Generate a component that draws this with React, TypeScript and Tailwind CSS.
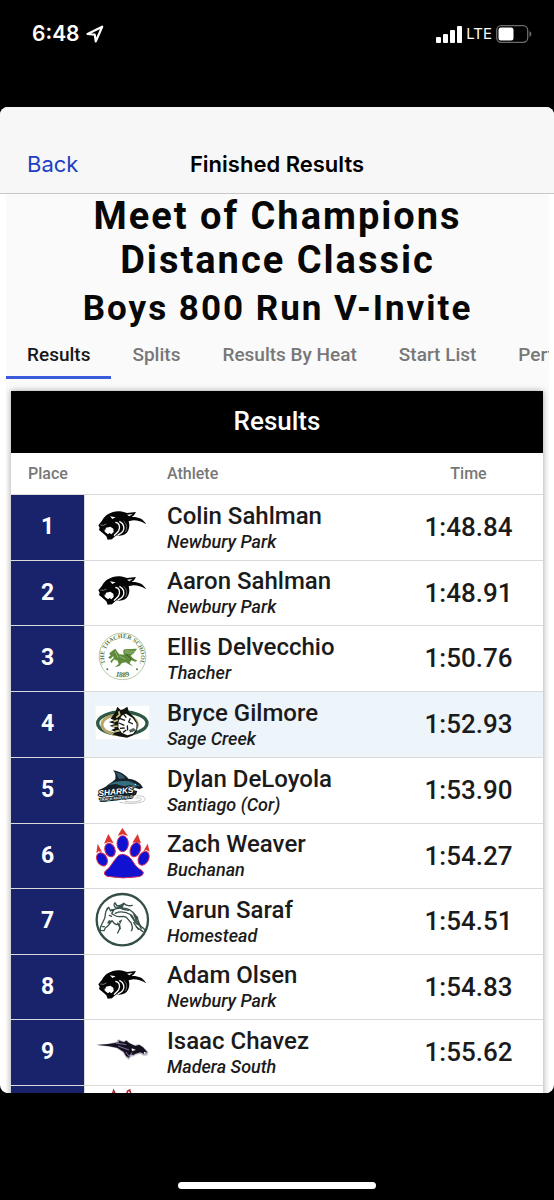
import React from "react";

const logoClass = "block h-16 w-[75px]";

const PantherLogo = () => (
  <svg viewBox="0 0 225 192" className={logoClass} aria-hidden="true">
    <path
      d="M40 88L51 74C59 58 77 47 100 46C111 45 119 49 126 51L153 48L147 58L140 63C158 62 174 67 184 85C171 77 158 73 145 73L131 76C136 91 131 108 120 115C113 119 103 120 95 118C89 122 85 126 81 130L68 131L64 121L53 111L42 102L44 95Z"
      fill="#050505"
    />
    <path d="M55 97L60 104L63 95L76 92L85 98L86 108L79 115L74 111L69 115L60 108Z" fill="white" />
    <path d="M75 61l17 3-10 5zM126 56l17-2-10 7z" fill="white" />
    <path
      d="M91 79C104 80 106 94 101 104C97 111 91 113 87 119M103 76C117 82 120 97 113 107C109 113 103 115 98 117"
      fill="none"
      stroke="white"
      strokeWidth="4"
    />
    <path d="M116 76C127 84 127 99 121 108" fill="none" stroke="#9c9c9c" strokeWidth="2" />
    <path d="M46 87l10 1 8-4" fill="none" stroke="#b5b5b5" strokeWidth="2" />
  </svg>
);

const ThacherLogo = () => (
  <svg viewBox="0 0 225 192" className={logoClass} aria-hidden="true">
    <defs>
      <path id="seal-top" d="M68 121A55 55 0 1 1 157 121" />
      <path id="seal-bottom" d="M72 135A60 60 0 0 0 153 135" />
    </defs>
    <circle cx="112.5" cy="88" r="70" fill="white" stroke="#8fac76" strokeWidth="2" />
    <text fill="#55793c" fontSize="18" fontFamily="Liberation Serif" fontWeight="700">
      <textPath href="#seal-top" startOffset="50%" textAnchor="middle">
        THE THACHER SCHOOL
      </textPath>
    </text>
    <text fill="#55793c" fontSize="22" fontFamily="Liberation Serif" fontWeight="700">
      <textPath href="#seal-bottom" startOffset="50%" textAnchor="middle">
        1889
      </textPath>
    </text>
    <circle cx="67" cy="127" r="3" fill="#55793c" />
    <circle cx="156" cy="127" r="3" fill="#55793c" />
    <path
      d="M73 79L84 70L91 65L96 73L103 82L117 83C114 74 113 69 119 67L156 65L151 73L145 80L137 86L144 94L157 101L151 104L139 100L134 108L144 118L130 111L122 106L111 108L103 117L89 121L101 111L97 100L86 98L79 109L76 102L86 93L85 87L76 96L69 91L77 86Z"
      fill="#5f8a3a"
    />
    <path d="M119 72l31 1M120 77l24 2M91 72l8 20M104 88l17 8M87 97l9 4" stroke="#b4ca92" strokeWidth="2" />
    <path d="M123 83C133 88 137 94 139 99" fill="none" stroke="#365d25" strokeWidth="3" />
  </svg>
);

const SageCreekLogo = () => (
  <svg viewBox="0 0 225 192" className={logoClass} aria-hidden="true">
    <rect x="32" y="39" width="161" height="100" fill="white" />
    <ellipse cx="112" cy="91" rx="74" ry="34" fill="none" stroke="#2d5843" strokeWidth="10" />
    <ellipse cx="104" cy="95" rx="53" ry="30" fill="none" stroke="#b5a66a" strokeWidth="9" />
    <path
      d="M77 77L91 57L97 41L107 51L115 49L127 41L132 57L147 72L158 92L156 112L145 127L126 134L101 130L82 124L94 117L78 112L91 105L74 98L90 93L71 87L89 82Z"
      fill="#11130f"
    />
    <path d="M110 68L123 62L143 75L155 92L154 109L144 122L127 127L110 119L100 104L101 84Z" fill="white" />
    <path
      d="M101 55l3 10-10 9M86 86l13-5M83 101l15-2M91 115l13-2"
      stroke="#d5c67f"
      strokeWidth="5"
      fill="none"
    />
    <path
      d="M104 76l16 6M102 90l16 7M105 106l14-1M114 118l10-7M136 76l-5 11 13 6M151 110l-17 7M127 97l1 15M117 65l7 9"
      fill="none"
      stroke="#141813"
      strokeWidth="4"
    />
    <path d="M131 112l14-7 6 4-9 9z" fill="#56685d" />
  </svg>
);

const SharksLogo = () => (
  <svg viewBox="0 0 225 192" className={logoClass} aria-hidden="true">
    <path
      d="M62 83C74 73 87 66 91 60C93 49 90 39 84 34C105 37 121 47 130 59C151 61 167 71 174 86L163 91L150 86L138 92L157 96L153 107L139 114L126 108L50 112L44 92Z"
      fill="#17212a"
    />
    <path d="M67 79C85 67 105 64 133 67L166 81L150 82L133 78L119 82L91 75Z" fill="#356f80" />
    <path d="M92 40C106 43 116 50 121 58L102 60Z" fill="#35586b" />
    <path d="M128 81l25 2-19 6z" fill="#d6e0e3" />
    <circle cx="151" cy="76" r="2" fill="white" />
    <path
      d="M154 111C170 108 184 115 179 124C172 133 137 136 104 130M151 118C164 114 174 119 167 124C154 130 134 130 120 127"
      fill="none"
      stroke="#c5c5c5"
      strokeWidth="3"
    />
    <g transform="translate(41 112) rotate(-6)">
      <text
        fontFamily="Liberation Sans"
        fontSize="25"
        fontStyle="italic"
        fontWeight="700"
        fill="white"
        stroke="#111d24"
        strokeWidth="6"
        strokeLinejoin="round"
        paintOrder="stroke"
      >
        SHARKS
      </text>
      <text
        x="2"
        y="15"
        fontFamily="Liberation Sans"
        fontSize="11"
        fontWeight="700"
        fill="white"
        stroke="#111d24"
        strokeWidth="5"
        paintOrder="stroke"
      >
        TRACK AND FIELD
      </text>
    </g>
  </svg>
);

const PawLogo = () => (
  <svg viewBox="0 0 225 192" className={logoClass} aria-hidden="true">
    <g fill="#df3530">
      <path d="M112 12L129 36L113 31L98 35Z" />
      <path d="M70 30L86 58L71 54L57 59Z" />
      <path d="M158 30L168 58L154 54L142 56Z" />
      <path d="M38 59L51 84L41 82L34 88Z" />
      <path d="M188 59L194 83L184 78L175 82Z" />
    </g>
    <g fill="#1111d2" stroke="#d42b56" strokeWidth="3">
      <ellipse cx="113" cy="59" rx="17" ry="24" />
      <ellipse cx="75" cy="78" rx="15" ry="21" transform="rotate(-20 75 78)" />
      <ellipse cx="151" cy="77" rx="15" ry="22" transform="rotate(20 151 77)" />
      <ellipse cx="51" cy="106" rx="15" ry="21" transform="rotate(-28 51 106)" />
      <ellipse cx="176" cy="103" rx="15" ry="22" transform="rotate(27 176 103)" />
      <path d="M101 94Q113 87 126 95C139 101 144 115 153 126Q159 133 171 140Q178 146 173 152Q169 156 161 158Q112 166 67 157Q53 151 61 141C76 132 84 111 101 94Z" />
    </g>
  </svg>
);

const HorseLogo = () => (
  <svg viewBox="0 0 225 192" className={logoClass} aria-hidden="true">
    <circle cx="112" cy="89" r="77" fill="white" stroke="#344f48" strokeWidth="7" />
    <g fill="none" stroke="#38504a" strokeWidth="4" strokeLinecap="round" strokeLinejoin="round">
      <path d="M65 58L71 52L77 63L87 59L80 71C91 77 95 81 102 80L117 79C128 80 131 93 138 98C143 109 144 117 139 122" />
      <path d="M67 58C58 66 63 73 59 85L47 110L45 121L57 122L61 114C69 109 75 101 81 92C89 104 96 106 102 101C107 108 104 119 98 129" />
      <path d="M78 60C91 60 98 51 111 55C127 52 142 64 152 76C164 90 160 104 169 116M100 55C86 54 85 42 90 38C96 53 108 47 117 40C121 46 132 49 142 46" />
      <path d="M91 70C107 62 125 67 139 75C149 84 145 98 160 104C174 112 180 117 180 122M137 76L151 97M158 81L153 90L166 106M146 98L160 118M98 99L106 116" />
      <path d="M73 76L80 79M52 110L58 110M111 57L130 61M116 40L110 53M154 111L174 125" />
    </g>
    <path d="M72 90L66 100L73 101L79 93ZM101 94L112 88L106 102ZM90 40L98 50L118 42L112 54L98 56ZM142 66L160 84L154 98Z" fill="#38504a" />
  </svg>
);

const StallionLogo = () => (
  <svg viewBox="0 0 225 192" className={logoClass} aria-hidden="true">
    <path
      d="M34 71L67 68L95 63L99 55L116 61L125 56L132 65L148 72L160 70L174 77L190 92L187 103L176 104L166 98L153 101L146 106L137 107L132 116L123 110L114 95L96 82L70 77Z"
      fill="#b6b1bd"
    />
    <path
      d="M35 72L72 69L103 64L99 58L116 64L124 59L134 67L151 75L163 71L174 79L186 93L179 100L166 94L151 98L145 102L137 100L132 110L123 105L116 92L96 80L70 75Z"
      fill="#15101e"
    />
    <path d="M91 66L124 71M99 75L132 87M123 93L132 106L142 94" fill="none" stroke="#8270a4" strokeWidth="3" />
    <path d="M140 82l13 5-12 3zM176 93l7 1-4 7z" fill="white" />
  </svg>
);

// Only the tips of this one show above the bottom of the sheet
const EarsLogo = () => (
  <svg viewBox="0 0 225 192" className={logoClass} aria-hidden="true">
    <path d="M78 34L86 11L97 34M121 34L128 12L134 9L142 34" fill="white" stroke="#ae2936" strokeWidth="5" />
  </svg>
);

const tabs = ["Results", "Splits", "Results By Heat", "Start List", "Performance List"];

const results = [
  { place: 1, athlete: "Colin Sahlman", school: "Newbury Park", time: "1:48.84", Logo: PantherLogo },
  { place: 2, athlete: "Aaron Sahlman", school: "Newbury Park", time: "1:48.91", Logo: PantherLogo },
  { place: 3, athlete: "Ellis Delvecchio", school: "Thacher", time: "1:50.76", Logo: ThacherLogo },
  { place: 4, athlete: "Bryce Gilmore", school: "Sage Creek", time: "1:52.93", Logo: SageCreekLogo, highlight: true },
  { place: 5, athlete: "Dylan DeLoyola", school: "Santiago (Cor)", time: "1:53.90", Logo: SharksLogo },
  { place: 6, athlete: "Zach Weaver", school: "Buchanan", time: "1:54.27", Logo: PawLogo },
  { place: 7, athlete: "Varun Saraf", school: "Homestead", time: "1:54.51", Logo: HorseLogo },
  { place: 8, athlete: "Adam Olsen", school: "Newbury Park", time: "1:54.83", Logo: PantherLogo },
  { place: 9, athlete: "Isaac Chavez", school: "Madera South", time: "1:55.62", Logo: StallionLogo },
];

const StatusBar = () => (
  <div className="flex h-[107px] shrink-0 items-start justify-between pt-5 pr-[22px] pl-8 font-[Inter,sans-serif] text-white">
    <div className="flex h-7 items-center gap-1.5">
      <span className="text-[21px] font-semibold">6:48</span>
      <svg viewBox="0 0 18 18" className="size-[18px]" aria-hidden="true">
        <path d="M1.5 9L16.2 1.7L9.8 16.4L8.7 9.6Z" fill="none" stroke="white" strokeWidth="2.2" strokeLinejoin="round" />
      </svg>
    </div>
    <div className="flex h-7 items-center gap-1">
      <svg viewBox="0 0 26 17" className="h-[17px] w-[26px]" fill="white" aria-hidden="true">
        <rect x="0" y="11" width="5" height="6" rx="1" />
        <rect x="7" y="8" width="5" height="9" rx="1" />
        <rect x="14" y="4" width="5" height="13" rx="1" />
        <rect x="21" y="0" width="5" height="17" rx="1" />
      </svg>
      <span className="text-[15px]">LTE</span>
      <svg viewBox="0 0 36 18" className="h-[18px] w-9" aria-hidden="true">
        <rect x="0.7" y="0.7" width="31" height="16.6" rx="4.5" fill="none" stroke="#6b6b6b" strokeWidth="1.3" />
        <rect x="2.5" y="2.5" width="15" height="13" rx="2.5" fill="white" />
        <path d="M33.5 6Q35.5 7 35.5 9T33.5 12Z" fill="#6b6b6b" />
      </svg>
    </div>
  </div>
);

const App = () => {
  return (
    <div className="flex h-screen flex-col bg-black font-[Roboto,sans-serif]">
      <StatusBar />

      <main className="flex min-h-0 flex-1 flex-col overflow-hidden rounded-lg bg-white">
        <header className="grid h-[87px] shrink-0 grid-cols-[1fr_auto_1fr] items-end border-b border-[#c8c8c8] bg-[#f7f7f7] px-[27px] pb-[15px] font-[Inter,sans-serif] text-[22px] leading-7">
          <button type="button" className="justify-self-start text-[#1d3fc4]">
            Back
          </button>
          <h1 className="font-semibold text-black">Finished Results</h1>
        </header>

        <div className="mr-[5px] ml-[6px] min-h-0 flex-1 overflow-hidden bg-[#fafafa]">
          <div className="text-center font-bold tracking-[2px] text-[#080808]">
            <h2 className="px-12 text-[38px] leading-11">Meet of Champions Distance Classic</h2>
            <h3 className="pt-1 text-[35px] leading-[46px]">Boys 800 Run V-Invite</h3>
          </div>

          {/* Tabs */}
          <nav className="flex overflow-hidden text-[19px] font-medium whitespace-nowrap text-[#777]">
            {tabs.map((tab, i) => (
              <button
                key={tab}
                type="button"
                className={
                  i === 0
                    ? "h-[47px] shrink-0 border-b-3 border-[#3b5bdb] px-[21px] pt-0.5 text-[#181818]"
                    : "h-[47px] shrink-0 border-b-3 border-transparent px-[21px] pt-0.5"
                }
              >
                {tab}
              </button>
            ))}
          </nav>

          {/* Results card */}
          <section className="mr-[6px] ml-[5px] mt-3 bg-white shadow-[0_0_6px_rgba(0,0,0,0.35)]">
            <h4 className="flex h-[62px] items-center justify-center bg-black pb-0.5 text-[26px] font-medium text-white">
              Results
            </h4>
            <table className="w-full table-fixed border-separate border-spacing-0 text-[#1b1b1b]">
              <colgroup>
                <col className="w-[74px]" />
                <col className="w-[82px]" />
                <col />
                <col className="w-[149px]" />
              </colgroup>
              <thead>
                <tr className="h-[42px] text-base font-medium text-[#777]">
                  <th className="border-b border-[#dadada] font-medium">Place</th>
                  <th className="border-b border-[#dadada]" />
                  <th className="border-b border-[#dadada] p-0 text-left font-medium">Athlete</th>
                  <th className="border-b border-[#dadada] font-medium">Time</th>
                </tr>
              </thead>
              <tbody>
                {results.map(({ place, athlete, school, time, Logo, highlight }) => (
                  <tr key={place} className={highlight ? "h-[66px] bg-[#edf4fa]" : "odd:h-[66px] even:h-[65px]"}>
                    <td className="border-r border-b border-[#dadada] bg-[#19236b] text-center text-[23px] font-bold text-white">
                      {place}
                    </td>
                    <td className="border-b border-[#dadada] p-0">
                      <Logo />
                    </td>
                    <td className="border-b border-[#dadada] p-0">
                      <div className="truncate text-2xl leading-7 font-medium">{athlete}</div>
                      <div className="truncate text-lg leading-6 font-medium italic">{school}</div>
                    </td>
                    <td className="border-b border-[#dadada] text-center text-[26px] font-medium">{time}</td>
                  </tr>
                ))}
                <tr className="h-[65px]">
                  <td className="border-r border-[#dadada] bg-[#19236b]" />
                  <td className="p-0">
                    <EarsLogo />
                  </td>
                  <td />
                  <td />
                </tr>
              </tbody>
            </table>
          </section>
        </div>
      </main>

      {/* Home indicator */}
      <div className="flex h-[107px] shrink-0 items-end justify-center pb-[11px]">
        <div className="h-[7px] w-[198px] rounded-full bg-white" />
      </div>
    </div>
  );
};

export default App;
